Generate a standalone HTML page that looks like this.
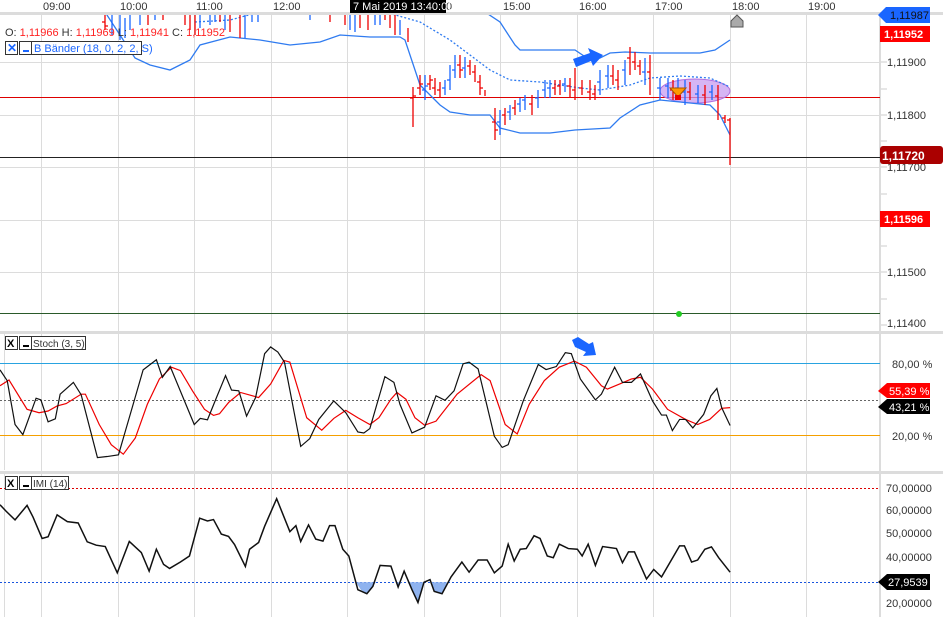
<!DOCTYPE html>
<html><head><meta charset="utf-8"><style>
body{margin:0;width:943px;height:617px;overflow:hidden;background:#fff;font-family:"Liberation Sans",sans-serif;}
svg{position:absolute;left:0;top:0}
.t{font-size:11px;fill:#333}
</style></head><body>
<svg width="943" height="617" viewBox="0 0 943 617">
<defs><clipPath id="mc"><rect x="0" y="15" width="880" height="316"/></clipPath></defs>
<!-- vertical grid -->
<g stroke="#dcdcdc" stroke-width="1">
<path d="M41.5,15V617M118.5,15V617M194.5,15V617M271.5,15V617M347.5,15V617M424.5,15V617M500.5,15V617M577.5,15V617M653.5,15V617M730.5,15V617M806.5,15V617M4.5,333V470M4.5,474V617"/>
<path d="M0,62.5H880M0,115.5H880M0,167.5H880M0,220.5H880M0,272.5H880"/>
</g>
<!-- separators -->
<rect x="0" y="12" width="943" height="3" fill="#dcdcdc"/>
<rect x="0" y="331" width="943" height="3" fill="#dcdcdc"/>
<rect x="0" y="471" width="943" height="3" fill="#dcdcdc"/>
<rect x="879" y="15" width="2" height="602" fill="#dcdcdc"/>
<!-- axis ticks -->
<g stroke="#ccc"><path d="M881,36H887M881,62H887M881,89H887M881,115H887M881,141H887M881,167H887M881,194H887M881,246H887M881,272H887M881,299H887M881,325H887"/></g>
<!-- time labels -->
<g class="t"><text x="43" y="10">09:00</text><text x="120" y="10">10:00</text><text x="196" y="10">11:00</text><text x="273" y="10">12:00</text><text x="503" y="10">15:00</text><text x="579" y="10">16:00</text><text x="655" y="10">17:00</text><text x="732" y="10">18:00</text><text x="808" y="10">19:00</text><text x="446" y="10">0</text></g>
<rect x="350" y="0" width="96" height="13" fill="#000"/>
<text x="353" y="10" fill="#fff" font-size="11">7 Mai 2019 13:40:00</text>
<!-- horizontal lines main -->
<path d="M0,97.5H880" stroke="#d00" stroke-width="1"/>
<path d="M0,157.5H880" stroke="#222" stroke-width="1"/>
<path d="M0,313.5H880" stroke="#2a5a2a" stroke-width="1"/>
<circle cx="679" cy="314" r="3" fill="#2c2"/>
<g clip-path="url(#mc)">
<ellipse cx="695" cy="91" rx="35" ry="12" fill="#c89cf0" fill-opacity="0.75" stroke="#b070e0"/>
<!-- bands -->
<g fill="none" stroke="#2f7bf0" stroke-width="1.3">
<path d="M105,12L120,35L135,58L150,65L170,70L190,60L200,45L230,37L260,40L290,45L320,42L340,35L370,37L400,37L405,40L420,85L440,105L450,112L470,115L490,115L500,128L520,133L550,133L575,130L610,128L620,118L640,105L660,100L690,103L710,105L720,115L730,135"/>
<path d="M485,12L500,22L515,45L520,50L550,50L575,50L590,60L600,58L610,53L625,52L650,53L700,53L715,50L730,40"/>
<path d="M195,22L230,20L260,12M385,12L420,22L450,40L470,55L490,70L510,80L540,82L580,88L600,90L630,85L650,78L680,76L710,78L730,87" stroke-dasharray="2,2"/>
</g>
<path stroke="#e00" stroke-width="1.3" fill="none" d="M105,15V30M148,15V25M163,15V20M185,15V25M190,15V30M195,15V35M220,15V22M230,15V32M240,15V38M330,15V22M345,15V25M360,15V28M368,15V30M385,15V20M390,15V28M395,15V35M408,28V42M413,87V127M420,75V95M430,75V90M435,78V95M440,82V98M460,55V78M470,60V75M475,65V82M480,75V95M485,90V96M495,108V140M505,108V125M515,100V115M532,95V115M555,80V95M560,80V95M570,78V98M575,68V100M582,80V95M590,80V100M595,85V100M613,65V85M618,70V90M630,47V75M635,52V70M640,60V75M650,55V95M673,80V100M690,82V100M705,85V105M718,85V120M725,115V123M730,118V165
M102,22h3M105,26h3M410,98h3M413,96h3M417,88h3M420,84h3M427,84h3M430,80h3M432,88h3M437,90h3M457,65h3M460,70h3M467,66h3M472,72h3M477,82h3M480,88h3M492,122h3M495,130h3M502,115h3M512,108h3M529,104h3M552,88h3M557,86h3M567,86h3M572,90h3M579,88h3M587,92h3M592,94h3M610,76h3M615,80h3M627,58h3M632,62h3M637,66h3M647,72h3M670,90h3M687,92h3M702,95h3M715,96h3M722,118h3M727,120h3"/>
<path stroke="#1a66ff" stroke-width="1.3" fill="none" d="M112,15V35M120,15V40M125,18V38M130,15V30M140,15V25M155,15V20M200,15V28M210,15V25M215,15V22M225,15V30M245,15V38M252,15V22M258,15V22M310,15V20M350,15V30M355,15V32M375,15V25M380,15V25M400,20V35M425,75V100M445,80V95M450,65V90M455,55V78M465,57V78M500,110V135M510,105V120M520,98V112M525,95V110M538,90V108M545,80V98M550,80V98M565,78V92M600,70V95M608,65V88M625,60V85M645,58V85M660,78V100M668,78V98M678,78V100M685,80V105M698,85V103M712,85V100
M422,90h3M425,86h3M442,88h3M447,80h3M452,70h3M462,68h3M497,122h3M507,112h3M517,104h3M522,100h3M535,98h3M542,90h3M547,88h3M562,84h3M597,82h3M605,76h3M622,70h3M642,72h3M657,88h3M665,86h3M675,88h3M682,92h3M695,94h3M709,92h3"/>
</g>
<!-- orange marker -->
<path d="M670,88h16l-8,9z" fill="#f90" stroke="#a50"/>
<rect x="675" y="95" width="6" height="5" fill="#e00"/>
<!-- arrows -->
<path d="M573,59L590,53L588,48L603,55L593,66L591,61L576,67z" fill="#1a66ff"/>
<path d="M572,340L578,337L589,344L593,342L596,355L583,356L586,352L575,347z" fill="#1a66ff"/>
<!-- 18:00 marker -->
<path d="M731,27V21L737,15L743,21V27z" fill="#aaa" stroke="#555"/>
<!-- OHLC -->
<text x="5" y="36" font-size="11" fill="#333">O: <tspan fill="#f22">1,11966</tspan>  H: <tspan fill="#f22">1,11969</tspan>  L: <tspan fill="#f22">1,11941</tspan>  C: <tspan fill="#f22">1,11952</tspan></text>
<rect x="5.5" y="41.5" width="12" height="13" fill="#fff" stroke="#333"/><text x="7" y="52" font-size="12" font-weight="bold" fill="#1a66ff">✕</text>
<rect x="19.5" y="41.5" width="12" height="13" fill="#fff" stroke="#333"/><rect x="23" y="50" width="6" height="2" fill="#1a66ff"/>
<rect x="31.5" y="41.5" width="110" height="13" fill="#fff" stroke="#333"/><text x="34" y="52" font-size="11" fill="#1a66ff">B Bänder (18, 0, 2, 2, S)</text>
<!-- right axis main -->
<g class="t" fill="#444"><text x="887" y="66">1,11900</text><text x="887" y="119">1,11800</text><text x="887" y="171">1,11700</text><text x="887" y="276">1,11500</text><text x="887" y="327">1,11400</text></g>
<path d="M886,7H930V23H886L878,15z" fill="#1a66ff"/><text x="890" y="19" font-size="11" fill="#111">1,11987</text>
<rect x="880" y="26" width="50" height="16" fill="#f00"/><text x="884" y="38" font-size="11" font-weight="bold" fill="#fff">1,11952</text>
<rect x="880" y="146" width="63" height="18" rx="3" fill="#a00"/><text x="882" y="160" font-size="12" font-weight="bold" fill="#fff">1,11720</text>
<rect x="880" y="211" width="50" height="16" fill="#f00"/><text x="884" y="223" font-size="11" font-weight="bold" fill="#fff">1,11596</text>
<!-- stoch panel -->
<path d="M0,363.5H880" stroke="#29a3e0"/>
<path d="M0,435.5H880" stroke="#f5a000"/>
<path d="M0,400.5H880" stroke="#666" stroke-dasharray="2,2"/>
<rect x="5.5" y="336.5" width="12" height="13" fill="#fff" stroke="#333"/><text x="7" y="347" font-size="11" font-weight="bold">X</text>
<rect x="19.5" y="336.5" width="12" height="13" fill="#fff" stroke="#333"/><rect x="23" y="345" width="6" height="2" fill="#000"/>
<rect x="31.5" y="336.5" width="54" height="13" fill="#fff" stroke="#333"/><text x="33" y="347" font-size="10" fill="#333">Stoch (3, 5)</text>
<g class="t" fill="#555"><text x="892" y="368">80,00 %</text><text x="892" y="440">20,00 %</text></g>
<path d="M887,383H930V398H887L878,391z" fill="#f00"/><text x="889" y="395" font-size="11" fill="#fff">55,39 %</text>
<path d="M887,399H930V414H887L878,407z" fill="#000"/><text x="889" y="411" font-size="11" fill="#fff">43,21 %</text>
<!-- imi panel -->
<path d="M0,488.5H880" stroke="#d00" stroke-dasharray="2,2"/>
<path d="M0,582.5H880" stroke="#1a55dd" stroke-dasharray="2,2"/>
<rect x="5.5" y="476.5" width="12" height="13" fill="#fff" stroke="#333"/><text x="7" y="487" font-size="11" font-weight="bold">X</text>
<rect x="19.5" y="476.5" width="12" height="13" fill="#fff" stroke="#333"/><rect x="23" y="485" width="6" height="2" fill="#000"/>
<rect x="31.5" y="476.5" width="37" height="13" fill="#fff" stroke="#333"/><text x="33" y="487" font-size="10" fill="#333">IMI (14)</text>
<g class="t" fill="#333"><text x="886" y="492">70,00000</text><text x="886" y="514">60,00000</text><text x="886" y="537">50,00000</text><text x="886" y="561">40,00000</text><text x="886" y="607">20,00000</text></g>
<path d="M887,574H930V590H887L878,582z" fill="#000"/><text x="888" y="586" font-size="11" fill="#fff">27,9539</text>
</svg>
<svg width="943" height="297" style="top:320px" viewBox="0 0 1568 881" preserveAspectRatio="none">
<g fill="#8fb3ef">
<path d="M592,778L600,800L610,812L620,790L625,778z"/>
<path d="M658,778L662,792L668,778z"/>
<path d="M678,778L685,800L695,838L702,790L705,778z"/>
<path d="M718,778L722,805L735,812L744,778z"/>
</g>
<g fill="none" vector-effect="non-scaling-stroke">
<polyline vector-effect="non-scaling-stroke" stroke="#e00" stroke-width="1.2" fill="none" points="0,195 15,178 45,265 65,275 80,270 95,255 110,248 135,220 142,220 165,310 185,370 205,398 225,350 245,250 265,175 285,140 300,150 320,210 340,265 355,283 365,278 380,245 400,215 430,230 450,190 472,120 482,125 510,290 535,327 555,292 575,268 595,290 615,310 630,290 650,235 660,215 675,235 690,290 706,312 725,300 760,220 800,162 815,180 840,310 860,338 880,250 905,180 930,140 955,122 975,140 1000,195 1010,205 1030,190 1050,175 1065,170 1085,205 1110,265 1140,295 1160,310 1180,295 1200,262 1214,260"/>
<polyline vector-effect="non-scaling-stroke" stroke="#111" stroke-width="1.2" fill="none" points="0,148 12,180 25,310 38,340 60,232 68,237 80,302 92,293 100,220 122,185 135,222 162,408 178,405 197,400 238,148 260,118 270,170 283,138 323,310 333,292 345,296 360,230 375,165 385,208 397,210 410,285 425,230 440,100 450,80 462,95 473,125 500,375 515,352 530,295 555,240 575,275 595,332 605,335 615,322 640,168 655,185 665,250 685,335 706,318 725,225 740,238 755,210 770,130 780,125 795,145 822,345 835,378 845,370 870,240 895,132 908,147 925,138 940,97 950,100 965,175 990,237 1000,220 1022,140 1035,185 1050,185 1065,160 1085,240 1100,282 1108,282 1118,328 1130,295 1140,295 1152,320 1170,280 1182,225 1192,203 1200,260 1214,313"/>
<polyline vector-effect="non-scaling-stroke" stroke="#111" stroke-width="1.5" fill="none" points="0,548 10,567 25,593 45,550 55,585 70,648 80,643 95,578 112,598 130,602 145,658 160,668 175,672 195,750 215,657 235,690 248,745 260,680 272,725 282,737 300,718 315,700 332,588 345,596 355,592 368,635 380,642 390,666 408,731 415,680 430,660 440,612 460,530 482,628 492,610 500,657 513,608 525,650 537,656 548,610 557,610 570,680 580,700 595,800 610,812 620,790 632,728 650,730 662,792 672,745 685,800 695,838 705,778 715,770 722,805 735,812 750,762 768,718 780,748 795,712 810,712 822,750 835,730 845,665 855,715 865,680 875,678 888,640 898,648 910,700 920,705 930,665 945,678 960,680 968,700 978,665 990,728 1002,672 1025,678 1035,720 1045,688 1055,688 1075,768 1087,740 1100,762 1130,670 1138,670 1150,718 1160,712 1172,680 1183,673 1195,705 1214,748"/>
</g>
</svg>
</body></html>
